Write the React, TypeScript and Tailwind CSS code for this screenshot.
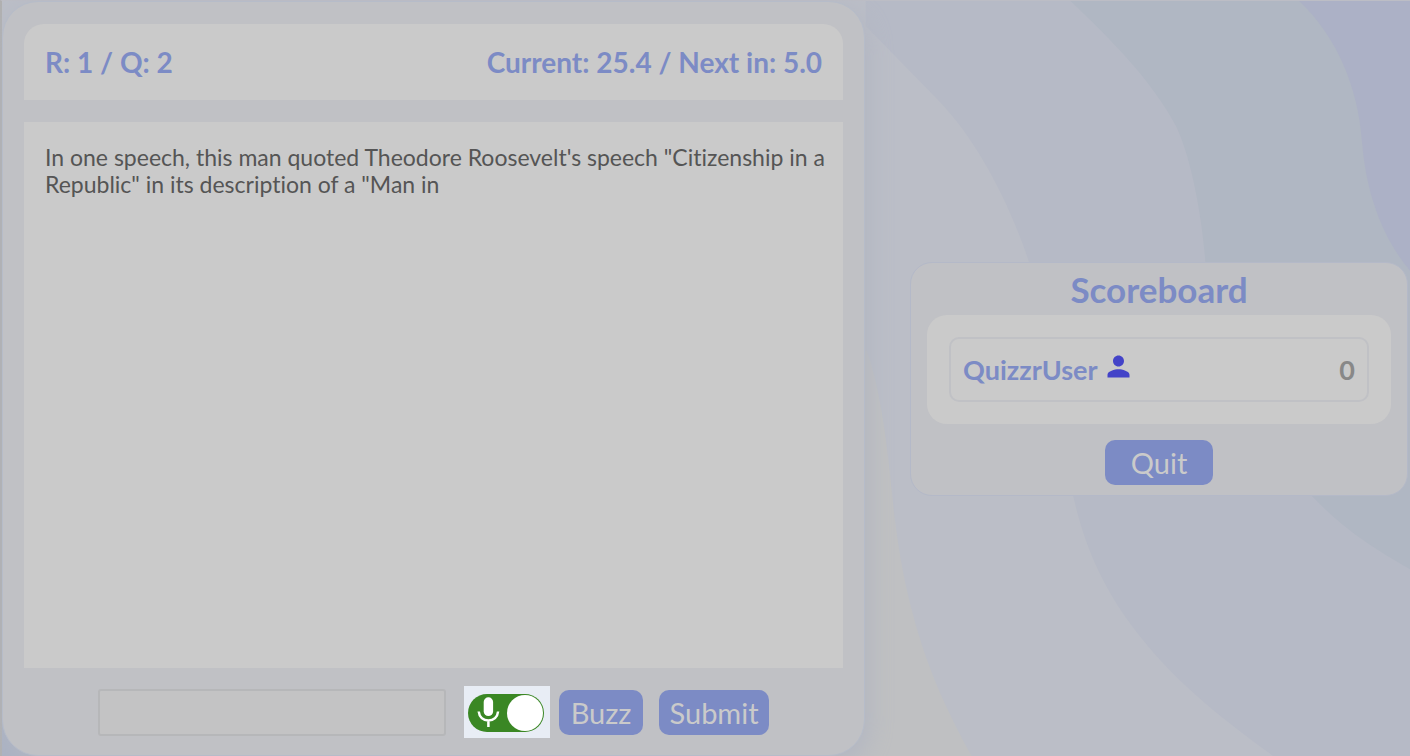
import { useState } from "react";
import { MdPerson } from "react-icons/md";

function Waves() {
  return (
    <svg
      className="absolute inset-0 -z-10 h-full w-full"
      viewBox="0 0 1410 756"
      preserveAspectRatio="none"
      aria-hidden="true"
    >
      <rect width="1410" height="756" fill="#bfc0c2" />
      <path d="M0 0H1410V756H971C943 705 926 665 913 617C900 569 895 530 891 490C885 430 878 385 866 350L0 300Z" fill="#bbbec7" />
      <path d="M865 0H1410V756H1273C1216 714 1172 680 1131 625C1098 580 1083 540 1073 497C1056 420 1050 340 1028 260C1008 200 976 140 940 102L865 25Z" fill="#b6bac6" />
      <path d="M1070 0H1410V569C1370 546 1343 528 1313 497C1240 420 1212 370 1205 260C1202 220 1192 160 1176 126C1152 80 1110 38 1070 0Z" fill="#b0b7c3" />
      <path d="M1299 0H1410V270C1381 236 1366 190 1362 142C1358 85 1336 35 1299 0Z" fill="#acb1c6" />
      <rect y="600" width="300" height="156" fill="#aab2c3" />
    </svg>
  );
}

function MicSwitch() {
  const [on, setOn] = useState(true);
  return (
    <label className="flex cursor-pointer items-center bg-[#e8edf5] pt-2 pr-[6px] pb-[6px] pl-1">
      <input
        type="checkbox"
        className="sr-only"
        aria-label="Microphone"
        checked={on}
        onChange={(e) => setOn(e.target.checked)}
      />
      <span
        className={
          on
            ? "flex h-[38px] w-[76px] items-center justify-between rounded-full bg-[#3a8724] px-px"
            : "flex h-[38px] w-[76px] flex-row-reverse items-center justify-between rounded-full bg-[#888888] px-px"
        }
      >
        <svg width="38" height="38" viewBox="0 0 38 38" aria-hidden="true">
          <rect x="14.7" y="3.3" width="9.4" height="18.8" rx="4.7" fill="#fff" />
          <path d="M9.700 17.500C10.200 23 14.200 26.500 19.400 26.500S28.600 23 29.100 17.500M19.400 26.500V33" fill="none" stroke="#fff" strokeWidth="2.500" />
        </svg>
        <span className="h-9 w-9 rounded-full bg-white" />
      </span>
    </label>
  );
}

export default function App() {
  return (
    <div className="relative isolate flex min-h-screen border-t border-l-2 border-t-[#bcbdc5] border-l-[#b0b0b0] font-['Lato','Open_Sans',sans-serif] [font-variant-ligatures:none]">
      <Waves />
      <main className="flex w-[61.3%] flex-col gap-[22px] rounded-[36px] border border-[#b6bcc9] bg-[#c0c1c5] px-[21px] pt-[22px] pb-[17px] shadow-[4px_8px_24px_#b2b6c2]">
        <header className="flex items-center justify-between rounded-t-[20px] bg-[#cacaca] px-[21px] pt-5 pb-[19px] text-[28px] leading-[37px] font-bold text-[#7c8bc5]">
          <span>R: 1 / Q: 2</span>
          <span>Current: 25.4 / Next in: 5.0</span>
        </header>
        <p className="flex-1 bg-[#cacaca] py-[22px] pr-3 pl-[21px] text-[23px] leading-[27px] text-[#555555]">
          In one speech, this man quoted Theodore Roosevelt's speech "Citizenship in a Republic" in its description of a "Man in
        </p>
        <form className="-mt-1 flex items-center justify-center" onSubmit={(e) => e.preventDefault()}>
          <input
            type="text"
            aria-label="Answer"
            className="mr-[18px] h-[47px] w-[348px] rounded-[3px] border-2 border-[#b6b7b9] bg-[#c3c3c4] px-3 text-[23px] text-[#555555]"
          />
          <MicSwitch />
          <button type="button" className="ml-[9px] h-[45px] w-[84px] rounded-[10px] bg-[#7c8bc5] text-[29px] leading-[37px] text-[#cacaca]">
            Buzz
          </button>
          <button type="submit" className="ml-4 h-[45px] w-[110px] rounded-[10px] bg-[#7c8bc5] text-[29px] leading-[37px] text-[#cacaca]">
            Submit
          </button>
        </form>
      </main>
      <aside className="flex flex-1 flex-col justify-center pr-[2px] pl-[45px]">
        <section className="flex flex-col items-center rounded-[22px] border border-[#b4b9c8] bg-[#c0c1c5] px-4 pt-[6px] pb-[10px]">
          <h2 className="mb-[5px] text-[35px] leading-[41px] font-bold text-[#7c8bc5]">Scoreboard</h2>
          <div className="mb-4 w-full rounded-[20px] bg-[#cacaca] p-[22px]">
            <div className="flex h-[65px] items-center justify-between rounded-[10px] border-2 border-[#c0c1c5] px-3 text-[27px] leading-[37px] font-bold">
              <span className="flex items-center text-[#7c8bc5]">
                QuizzrUser
                <MdPerson className="mb-[6px] ml-1 size-[33px] text-[#4343c8]" />
              </span>
              <span className="text-[#888888]">0</span>
            </div>
          </div>
          <button type="button" className="h-[45px] w-[108px] rounded-[10px] bg-[#7c8bc5] text-[29px] leading-[37px] text-[#cacaca]">
            Quit
          </button>
        </section>
      </aside>
    </div>
  );
}
